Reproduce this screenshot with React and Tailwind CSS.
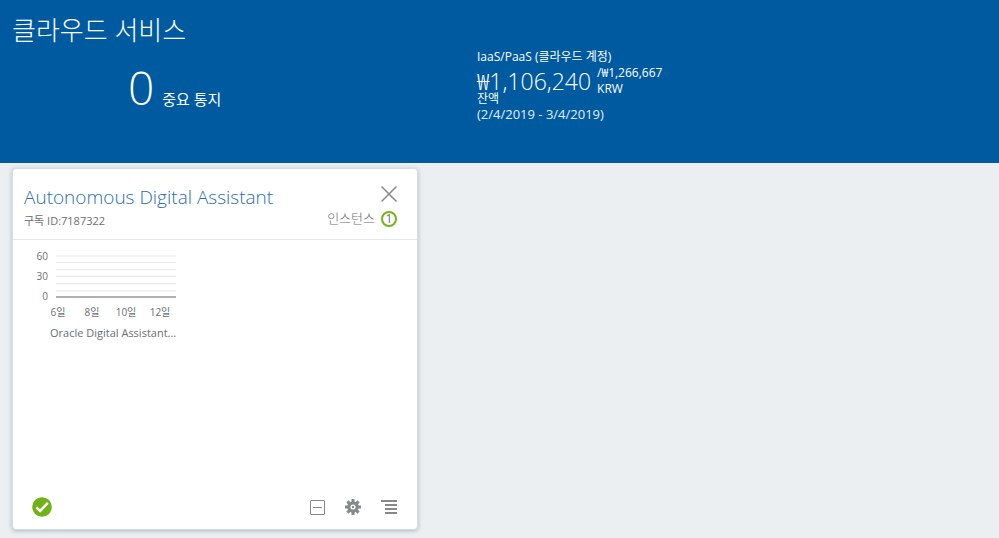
const GRID_LINES = [
  { y: 8, color: "#f2f3f4", width: 2 },
  { y: 15, color: "#e4e8ec", width: 1 },
  { y: 22, color: "#e4e8ec", width: 1 },
  { y: 29, color: "#e4e8ec", width: 1 },
  { y: 36, color: "#e4e8ec", width: 1 },
  { y: 43, color: "#f0f1f2", width: 2 },
];

function Header() {
  return (
    <header className="flex bg-[#005a9f] pt-3 pb-[41px] pl-3 text-white">
      <section className="w-[465px] shrink-0">
        <h1 className="text-[26px] leading-9 font-light">클라우드 서비스</h1>
        <p className="flex items-baseline pt-2 pl-[116px]">
          <span className="text-[46px] leading-[63px] font-light">0</span>
          <span className="pl-2 text-[15px]">중요 통지</span>
        </p>
      </section>
      <section className="pt-[37px] text-[12px] leading-4">
        <p>IaaS/PaaS (클라우드 계정)</p>
        <div className="flex h-[26px] gap-[6px]">
          <p className="text-[23px] leading-8 font-light">₩1,106,240</p>
          <p>
            /₩1,266,667
            <br />
            KRW
          </p>
        </div>
        <p className="leading-[15px]">잔액</p>
        <p className="text-[13px] text-[#e2edf6]">(2/4/2019 - 3/4/2019)</p>
      </section>
    </header>
  );
}

function UsageChart() {
  return (
    <figure className="w-[190px] pt-2 pl-5">
      <div className="flex">
        <div className="flex h-14 w-[15px] flex-col text-right text-[10px] leading-5">
          <span className="-mt-[2px]">60</span>
          <span>30</span>
          <span>0</span>
        </div>
        <svg
          className="ml-2 block"
          width="120"
          height="56"
          viewBox="0 0 120 56"
          shapeRendering="crispEdges"
          aria-hidden="true"
        >
          {GRID_LINES.map((line) => (
            <rect key={line.y} x="0" y={line.y - 1} width="120" height={line.width} fill={line.color} />
          ))}
          <rect x="0" y="48" width="120" height="2" fill="#b0b0b2" />
        </svg>
      </div>
      <div className="ml-2 grid w-[136px] grid-cols-4 text-center text-[10px] leading-4">
        <span>6일</span>
        <span>8일</span>
        <span>10일</span>
        <span>12일</span>
      </div>
      <figcaption className="pt-1 pl-[17px] text-[11px] leading-[18px] whitespace-nowrap">
        Oracle Digital Assistant...
      </figcaption>
    </figure>
  );
}

function ServiceCard() {
  return (
    <article className="flex h-[362px] w-[406px] flex-col rounded-sm border border-[#d6dde2] bg-white text-[#6b6e71] shadow-[0_1px_4px_rgba(60,80,95,0.35)]">
      <div className="flex justify-between border-b border-[#e4e7e9] pt-3 pr-5 pb-2 pl-[11px]">
        <div>
          <h2 className="text-[19px] leading-8 font-light">
            <a href="#service" className="text-[#2a6eab]">
              Autonomous Digital Assistant
            </a>
          </h2>
          <p className="text-[11px] leading-4">구독 ID:7187322</p>
        </div>
        <div className="flex flex-col items-end">
          <button type="button" aria-label="닫기" className="flex h-[26px] items-center">
            <svg width="16" height="16" viewBox="0 0 16 16" fill="none" stroke="#85898c" strokeWidth="1.5" aria-hidden="true">
              <path d="M.5.5 15.5 15.5M15.5.5.5 15.5" />
            </svg>
          </button>
          <p className="flex h-6 items-center gap-[6px] text-[13px] font-light">
            인스턴스
            <span className="flex size-4 items-center justify-center rounded-full border-2 border-[#73b415] text-[12px] leading-3 font-normal">
              1
            </span>
          </p>
        </div>
      </div>
      <UsageChart />
      <footer className="mt-auto flex items-center justify-between pr-5 pb-3 pl-[19px]">
        <svg width="20" height="20" viewBox="0 0 20 20" role="img" aria-label="정상">
          <circle cx="10" cy="10" r="9.8" fill="#6fb213" />
          <path d="M4.4 10.3 8.1 14 15.8 5.9" fill="none" stroke="#fff" strokeWidth="2.5" />
        </svg>
        <div className="flex items-center gap-5">
          <button type="button" aria-label="최소화">
            <svg className="block" width="15" height="15" viewBox="0 0 15 15" fill="none" stroke="#85898c" aria-hidden="true">
              <rect x=".5" y=".5" width="14" height="14" rx=".5" />
              <path d="M3 7.5h9" />
            </svg>
          </button>
          <button type="button" aria-label="설정">
            <svg className="block" width="16" height="16" viewBox="0 0 16 16" aria-hidden="true">
              <g fill="none" stroke="#85898c">
                <path
                  d="M8 0v4M8 12v4M0 8h4M12 8h4M2.4 2.4l2.7 2.7M10.9 10.9l2.7 2.7M13.6 2.4l-2.7 2.7M5.1 10.9l-2.7 2.7"
                  strokeWidth="3"
                />
                <circle cx="8" cy="8" r="4.2" strokeWidth="3.2" />
              </g>
              <circle cx="8" cy="8" r="1.2" fill="#85898c" />
            </svg>
          </button>
          <button type="button" aria-label="메뉴">
            <svg className="block" width="16" height="14" viewBox="0 0 16 14" fill="#85898c" aria-hidden="true">
              <path d="M0 0h16v2H0zM4 4h12v2H4zM4 8h12v2H4zM4 12h12v2H4z" />
            </svg>
          </button>
        </div>
      </footer>
    </article>
  );
}

export default function App() {
  return (
    <div className="min-h-screen bg-[#ebeff2] font-['Open_Sans','Noto_Sans_CJK_KR',sans-serif]">
      <Header />
      <main className="pt-[5px] pl-3">
        <ServiceCard />
      </main>
    </div>
  );
}
